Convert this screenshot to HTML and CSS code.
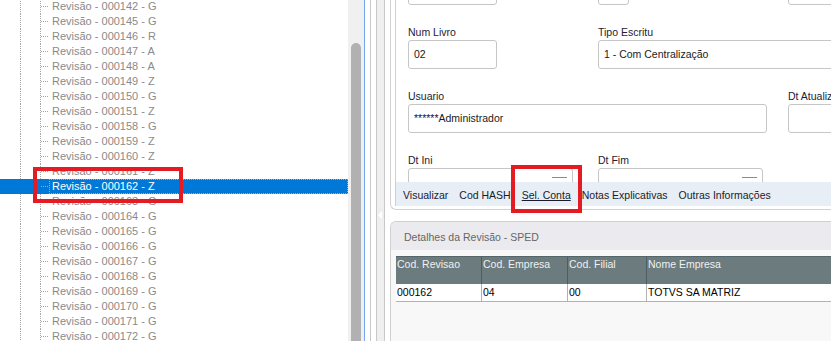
FILE: index.html
```html
<!DOCTYPE html>
<html lang="pt-BR">

<head>
  <meta charset="UTF-8">
  <title>Revisões - SPED</title>
  <link rel="stylesheet" href="styles.css">
</head>

<body>
  <div class="app">
    <!-- árvore de revisões -->
    <div class="tree-pane">
      <ul class="tree">
        <li class="node"><span class="guide"></span><span class="branch"></span><span class="label">Revisão - 000142 - G</span></li>
        <li class="node"><span class="guide"></span><span class="branch"></span><span class="label">Revisão - 000145 - G</span></li>
        <li class="node"><span class="guide"></span><span class="branch"></span><span class="label">Revisão - 000146 - R</span></li>
        <li class="node"><span class="guide"></span><span class="branch"></span><span class="label">Revisão - 000147 - A</span></li>
        <li class="node"><span class="guide"></span><span class="branch"></span><span class="label">Revisão - 000148 - A</span></li>
        <li class="node"><span class="guide"></span><span class="branch"></span><span class="label">Revisão - 000149 - Z</span></li>
        <li class="node"><span class="guide"></span><span class="branch"></span><span class="label">Revisão - 000150 - G</span></li>
        <li class="node"><span class="guide"></span><span class="branch"></span><span class="label">Revisão - 000151 - Z</span></li>
        <li class="node"><span class="guide"></span><span class="branch"></span><span class="label">Revisão - 000158 - G</span></li>
        <li class="node"><span class="guide"></span><span class="branch"></span><span class="label">Revisão - 000159 - Z</span></li>
        <li class="node"><span class="guide"></span><span class="branch"></span><span class="label">Revisão - 000160 - Z</span></li>
        <li class="node"><span class="guide"></span><span class="branch"></span><span class="label">Revisão - 000161 - Z</span></li>
        <li class="node selected"><span class="guide"></span><span class="branch"></span><span class="label">Revisão - 000162 - Z</span></li>
        <li class="node"><span class="guide"></span><span class="branch"></span><span class="label">Revisão - 000163 - G</span></li>
        <li class="node"><span class="guide"></span><span class="branch"></span><span class="label">Revisão - 000164 - G</span></li>
        <li class="node"><span class="guide"></span><span class="branch"></span><span class="label">Revisão - 000165 - G</span></li>
        <li class="node"><span class="guide"></span><span class="branch"></span><span class="label">Revisão - 000166 - G</span></li>
        <li class="node"><span class="guide"></span><span class="branch"></span><span class="label">Revisão - 000167 - G</span></li>
        <li class="node"><span class="guide"></span><span class="branch"></span><span class="label">Revisão - 000168 - G</span></li>
        <li class="node"><span class="guide"></span><span class="branch"></span><span class="label">Revisão - 000169 - G</span></li>
        <li class="node"><span class="guide"></span><span class="branch"></span><span class="label">Revisão - 000170 - G</span></li>
        <li class="node"><span class="guide"></span><span class="branch"></span><span class="label">Revisão - 000171 - G</span></li>
        <li class="node"><span class="guide"></span><span class="branch"></span><span class="label">Revisão - 000172 - G</span></li>
      </ul>
    </div>

    <!-- barra de rolagem -->
    <div class="vscroll">
      <div class="thumb"></div>
    </div>

    <!-- divisor -->
    <div class="splitter">
      <span class="sp sp-a"></span>
      <span class="sp sp-b"></span>
      <span class="sp sp-c"><i class="arrow"></i></span>
      <span class="sp sp-d"></span>
    </div>

    <!-- painel principal -->
    <div class="main">
      <div class="form-card">
        <div class="form-panel">
          <div class="form">
            <div class="form-grid">
              <div class="field"><label>&nbsp;</label><div class="box w89"></div></div>
              <div class="field"><label>&nbsp;</label><div class="box w31"></div></div>
              <div class="field"><label>&nbsp;</label><div class="box wfull"></div></div>

              <div class="field"><label>Num Livro</label><div class="box w89">02</div></div>
              <div class="field span2"><label>Tipo Escritu</label><div class="box wfull">1 - Com Centralização</div></div>

              <div class="field span2"><label>Usuario</label><div class="box w359">******Administrador</div></div>
              <div class="field"><label>Dt Atualiz</label><div class="box wfull"></div></div>

              <div class="field"><label>Dt Ini</label><div class="box w165 date"><span class="pick"></span></div></div>
              <div class="field"><label>Dt Fim</label><div class="box w165 date"><span class="pick"></span></div></div>
            </div>
          </div>
          <div class="tabs">
            <span class="tab">Visualizar</span>
            <span class="tab">Cod HASH</span>
            <span class="tab active">Sel. Conta</span>
            <span class="tab">Notas Explicativas</span>
            <span class="tab">Outras Informações</span>
          </div>
        </div>
      </div>

      <div class="detail-card">
        <div class="detail-title">Detalhes da Revisão - SPED</div>
        <div class="detail-body">
          <div class="grid-row grid-head">
            <div class="cell">Cod. Revisao</div>
            <div class="cell">Cod. Empresa</div>
            <div class="cell">Cod. Filial</div>
            <div class="cell">Nome Empresa</div>
          </div>
          <div class="grid-row grid-data">
            <div class="cell">000162</div>
            <div class="cell">04</div>
            <div class="cell">00</div>
            <div class="cell">TOTVS SA MATRIZ</div>
          </div>
        </div>
      </div>
    </div>
  </div>

  <!-- marcações em vermelho -->
  <div class="mark mark-tree"></div>
  <div class="mark mark-tab"></div>
</body>

</html>
```

FILE: styles.css
```css
* {
  margin: 0;
  padding: 0;
  box-sizing: border-box;
}

html {
  overflow: hidden;
}

body {
  position: relative;
  width: 831px;
  height: 341px;
  overflow: hidden;
  background: #fff;
  font-family: "Liberation Sans", Arial, sans-serif;
  font-size: 10.5px;
  color: #1b1f2e;
}

.app {
  display: flex;
  height: 341px;
  overflow: hidden;
}

/* árvore */
.tree-pane {
  width: 348px;
  flex-shrink: 0;
  overflow: hidden;
  background: #fff;
}

.tree {
  list-style: none;
  margin-top: -1px;
}

.node {
  display: flex;
  height: 15px;
  padding-left: 20px;
  font-size: 11px;
  color: #8a8a8a;
}

.guide {
  width: 20px;
  border-left: 1px dotted #a6a6a6;
}

.branch {
  width: 9px;
  border-left: 1px dotted #a6a6a6;
  background: linear-gradient(to right, #a6a6a6 1px, transparent 1px) 0 7px / 2px 1px repeat-x;
}

.label {
  border: 1px solid transparent;
  padding: 0 2px;
  line-height: 13px;
  white-space: nowrap;
}

.node.selected {
  background: #0078d7;
}

.node.selected .guide,
.node.selected .branch {
  border-left-color: transparent;
}

.node.selected .branch {
  background-image: linear-gradient(to right, #d9a35a 1px, transparent 1px);
}

.node.selected .label {
  flex: 1;
  border: 1px dotted #f0a040;
  color: #fff;
}

/* barra de rolagem */
.vscroll {
  width: 16px;
  flex-shrink: 0;
  overflow: hidden;
  background: #f0f0f0;
  padding: 43px 0 0 3px;
}

.thumb {
  width: 10px;
  height: 298px;
  background: #b1b1b1;
  border-radius: 5px 5px 0 0;
}

/* divisor */
.splitter {
  display: flex;
  flex-shrink: 0;
}

.sp {
  width: 6px;
  border-left: 1px solid #c8c8c8;
}

.sp-a {
  border-left-color: #76a4f2;
}

.sp-c {
  width: 8px;
  background: #efefef;
  padding: 211px 0 0 1px;
}

.arrow {
  display: block;
  width: 0;
  height: 0;
  border-right: 4px solid #fff;
  border-top: 4px solid transparent;
  border-bottom: 4px solid transparent;
}

/* painel principal */
.main {
  width: 441px;
  flex-shrink: 0;
  overflow: hidden;
  display: flex;
  flex-direction: column;
}

.form-card {
  width: 640px;
  height: 210px;
  flex-shrink: 0;
  border-left: 1px solid #d2d2d2;
  border-bottom: 1px solid #d2d2d2;
  border-bottom-left-radius: 6px;
  padding: 0 0 3px 4px;
}

.form-panel {
  height: 206px;
  border-left: 1px solid #d0d0d0;
  display: flex;
  flex-direction: column;
}

.form {
  flex: 1;
  overflow: hidden;
  padding-left: 12px;
}

.form-grid {
  margin-top: -38px;
  display: grid;
  grid-template-columns: 190px 190px 240px;
  row-gap: 21px;
}

.field.span2 {
  grid-column: span 2;
}

.field label {
  display: block;
  height: 12px;
  line-height: 12px;
  margin-bottom: 2px;
  color: #1d2236;
  white-space: nowrap;
}

.box {
  height: 29px;
  border: 1px solid #c6c6c6;
  border-radius: 3px;
  background: #fff;
  padding-left: 5px;
  line-height: 27px;
  color: #1a1a1a;
  white-space: nowrap;
}

.w31 { width: 31px; }
.w89 { width: 89px; }
.w165 { width: 165px; }
.w359 { width: 359px; }
.wfull { width: 100%; }

.date {
  display: flex;
  justify-content: flex-end;
  padding: 8px 5px 0 0;
}

.pick {
  width: 15px;
  height: 0;
  border-top: 1px solid #8a8a8a;
}

/* abas */
.tabs {
  height: 24px;
  flex-shrink: 0;
  background: #e8eef5;
  display: flex;
  align-items: center;
  gap: 11px;
  padding: 1px 0 0 7px;
  color: #1b1b2b;
  white-space: nowrap;
}

.tab.active {
  text-decoration: underline;
}

/* detalhes */
.detail-card {
  width: 640px;
  flex: 1;
  margin-top: 11px;
  border-top: 1px solid #d0d0d0;
  border-left: 1px solid #d0d0d0;
  border-top-left-radius: 6px;
  display: flex;
  flex-direction: column;
  overflow: hidden;
}

.detail-title {
  height: 28px;
  flex-shrink: 0;
  background: #ebebef;
  padding: 2px 0 0 13px;
  display: flex;
  align-items: center;
  color: #666;
}

.detail-body {
  flex: 1;
  background: #f8f8f8;
  padding: 6px 0 0 5px;
}

.grid-row {
  display: grid;
  grid-template-columns: 86px 86px 79px 1fr;
}

.grid-head {
  height: 28px;
  background: #6c7b7d;
  border-top: 1px solid #55666a;
  color: #eef2f2;
}

.grid-head .cell {
  border-right: 1px solid #4f5d60;
  padding: 1px 0 0 1px;
  line-height: 12px;
}

.grid-data {
  height: 18px;
  background: #fff;
  border-bottom: 1px solid #b2b2b2;
  color: #000;
}

.grid-data .cell {
  border-right: 1px solid #b2b2b2;
  padding-left: 1px;
  line-height: 17px;
}

/* marcações */
.mark {
  position: absolute;
  border: 4px solid #e41b23;
}

.mark-tree {
  left: 33px;
  top: 167px;
  width: 150px;
  height: 36px;
}

.mark-tab {
  left: 511px;
  top: 165px;
  width: 71px;
  height: 48px;
}
```
